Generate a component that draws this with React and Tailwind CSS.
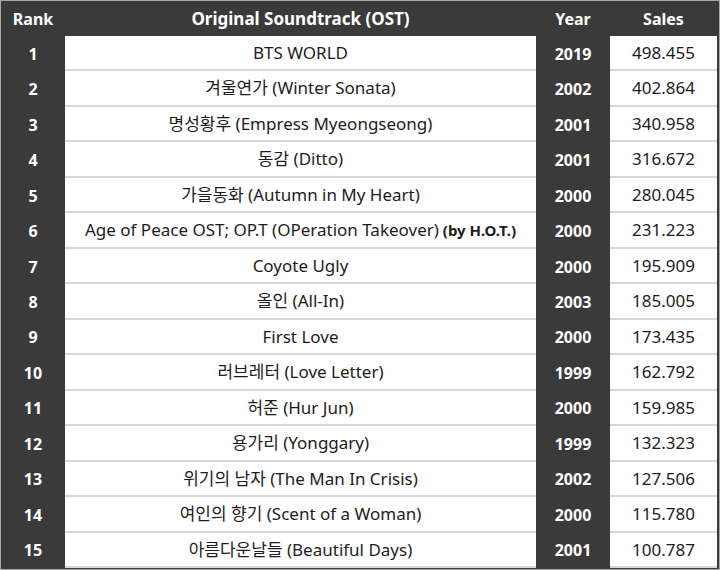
const rows = [
  ['1', 'BTS WORLD', '2019', '498.455'],
  ['2', '겨울연가 (Winter Sonata)', '2002', '402.864'],
  ['3', '명성황후 (Empress Myeongseong)', '2001', '340.958'],
  ['4', '동감 (Ditto)', '2001', '316.672'],
  ['5', '가을동화 (Autumn in My Heart)', '2000', '280.045'],
  ['6', 'Age of Peace OST; OP.T (OPeration Takeover)', '2000', '231.223', '(by H.O.T.)'],
  ['7', 'Coyote Ugly', '2000', '195.909'],
  ['8', '올인 (All-In)', '2003', '185.005'],
  ['9', 'First Love', '2000', '173.435'],
  ['10', '러브레터 (Love Letter)', '1999', '162.792'],
  ['11', '허준 (Hur Jun)', '2000', '159.985'],
  ['12', '용가리 (Yonggary)', '1999', '132.323'],
  ['13', '위기의 남자 (The Man In Crisis)', '2002', '127.506'],
  ['14', '여인의 향기 (Scent of a Woman)', '2000', '115.780'],
  ['15', '아름다운날들 (Beautiful Days)', '2001', '100.787'],
]

export default function App() {
  return (
    <div
      className="w-[720px] h-[570px] border border-[#a8a8a8] bg-[#3a3a3a] grid grid-cols-[64px_471px_74px_107px_2px] grid-rows-[35px_repeat(15,1fr)] pb-px text-[17px] text-[#1c1c1c]"
      style={{ fontFamily: '"Noto Sans", "Noto Sans CJK KR", sans-serif' }}
    >
      <div className="flex items-center justify-center font-bold text-white text-[16px]">Rank</div>
      <div className="flex items-center justify-center font-bold text-white">Original Soundtrack (OST)</div>
      <div className="flex items-center justify-center font-bold text-white text-[16px]">Year</div>
      <div className="flex items-center justify-center font-bold text-white text-[16px]">Sales</div>
      <div />
      {rows.map(([rank, title, year, sales, extra]) => (
        <div key={rank} className="contents">
          <div className="flex items-center justify-center font-bold text-white text-[16px]">{rank}</div>
          <div className="flex items-center justify-center bg-white border-b-2 border-[#d8d8d8] whitespace-nowrap">
            {title}
            {extra && <span className="ml-1 font-bold text-[15px]">{extra}</span>}
          </div>
          <div className="flex items-center justify-center font-bold text-white text-[16px]">{year}</div>
          <div className="flex items-center justify-center bg-white border-b-2 border-[#d8d8d8]">{sales}</div>
          <div />
        </div>
      ))}
    </div>
  )
}
